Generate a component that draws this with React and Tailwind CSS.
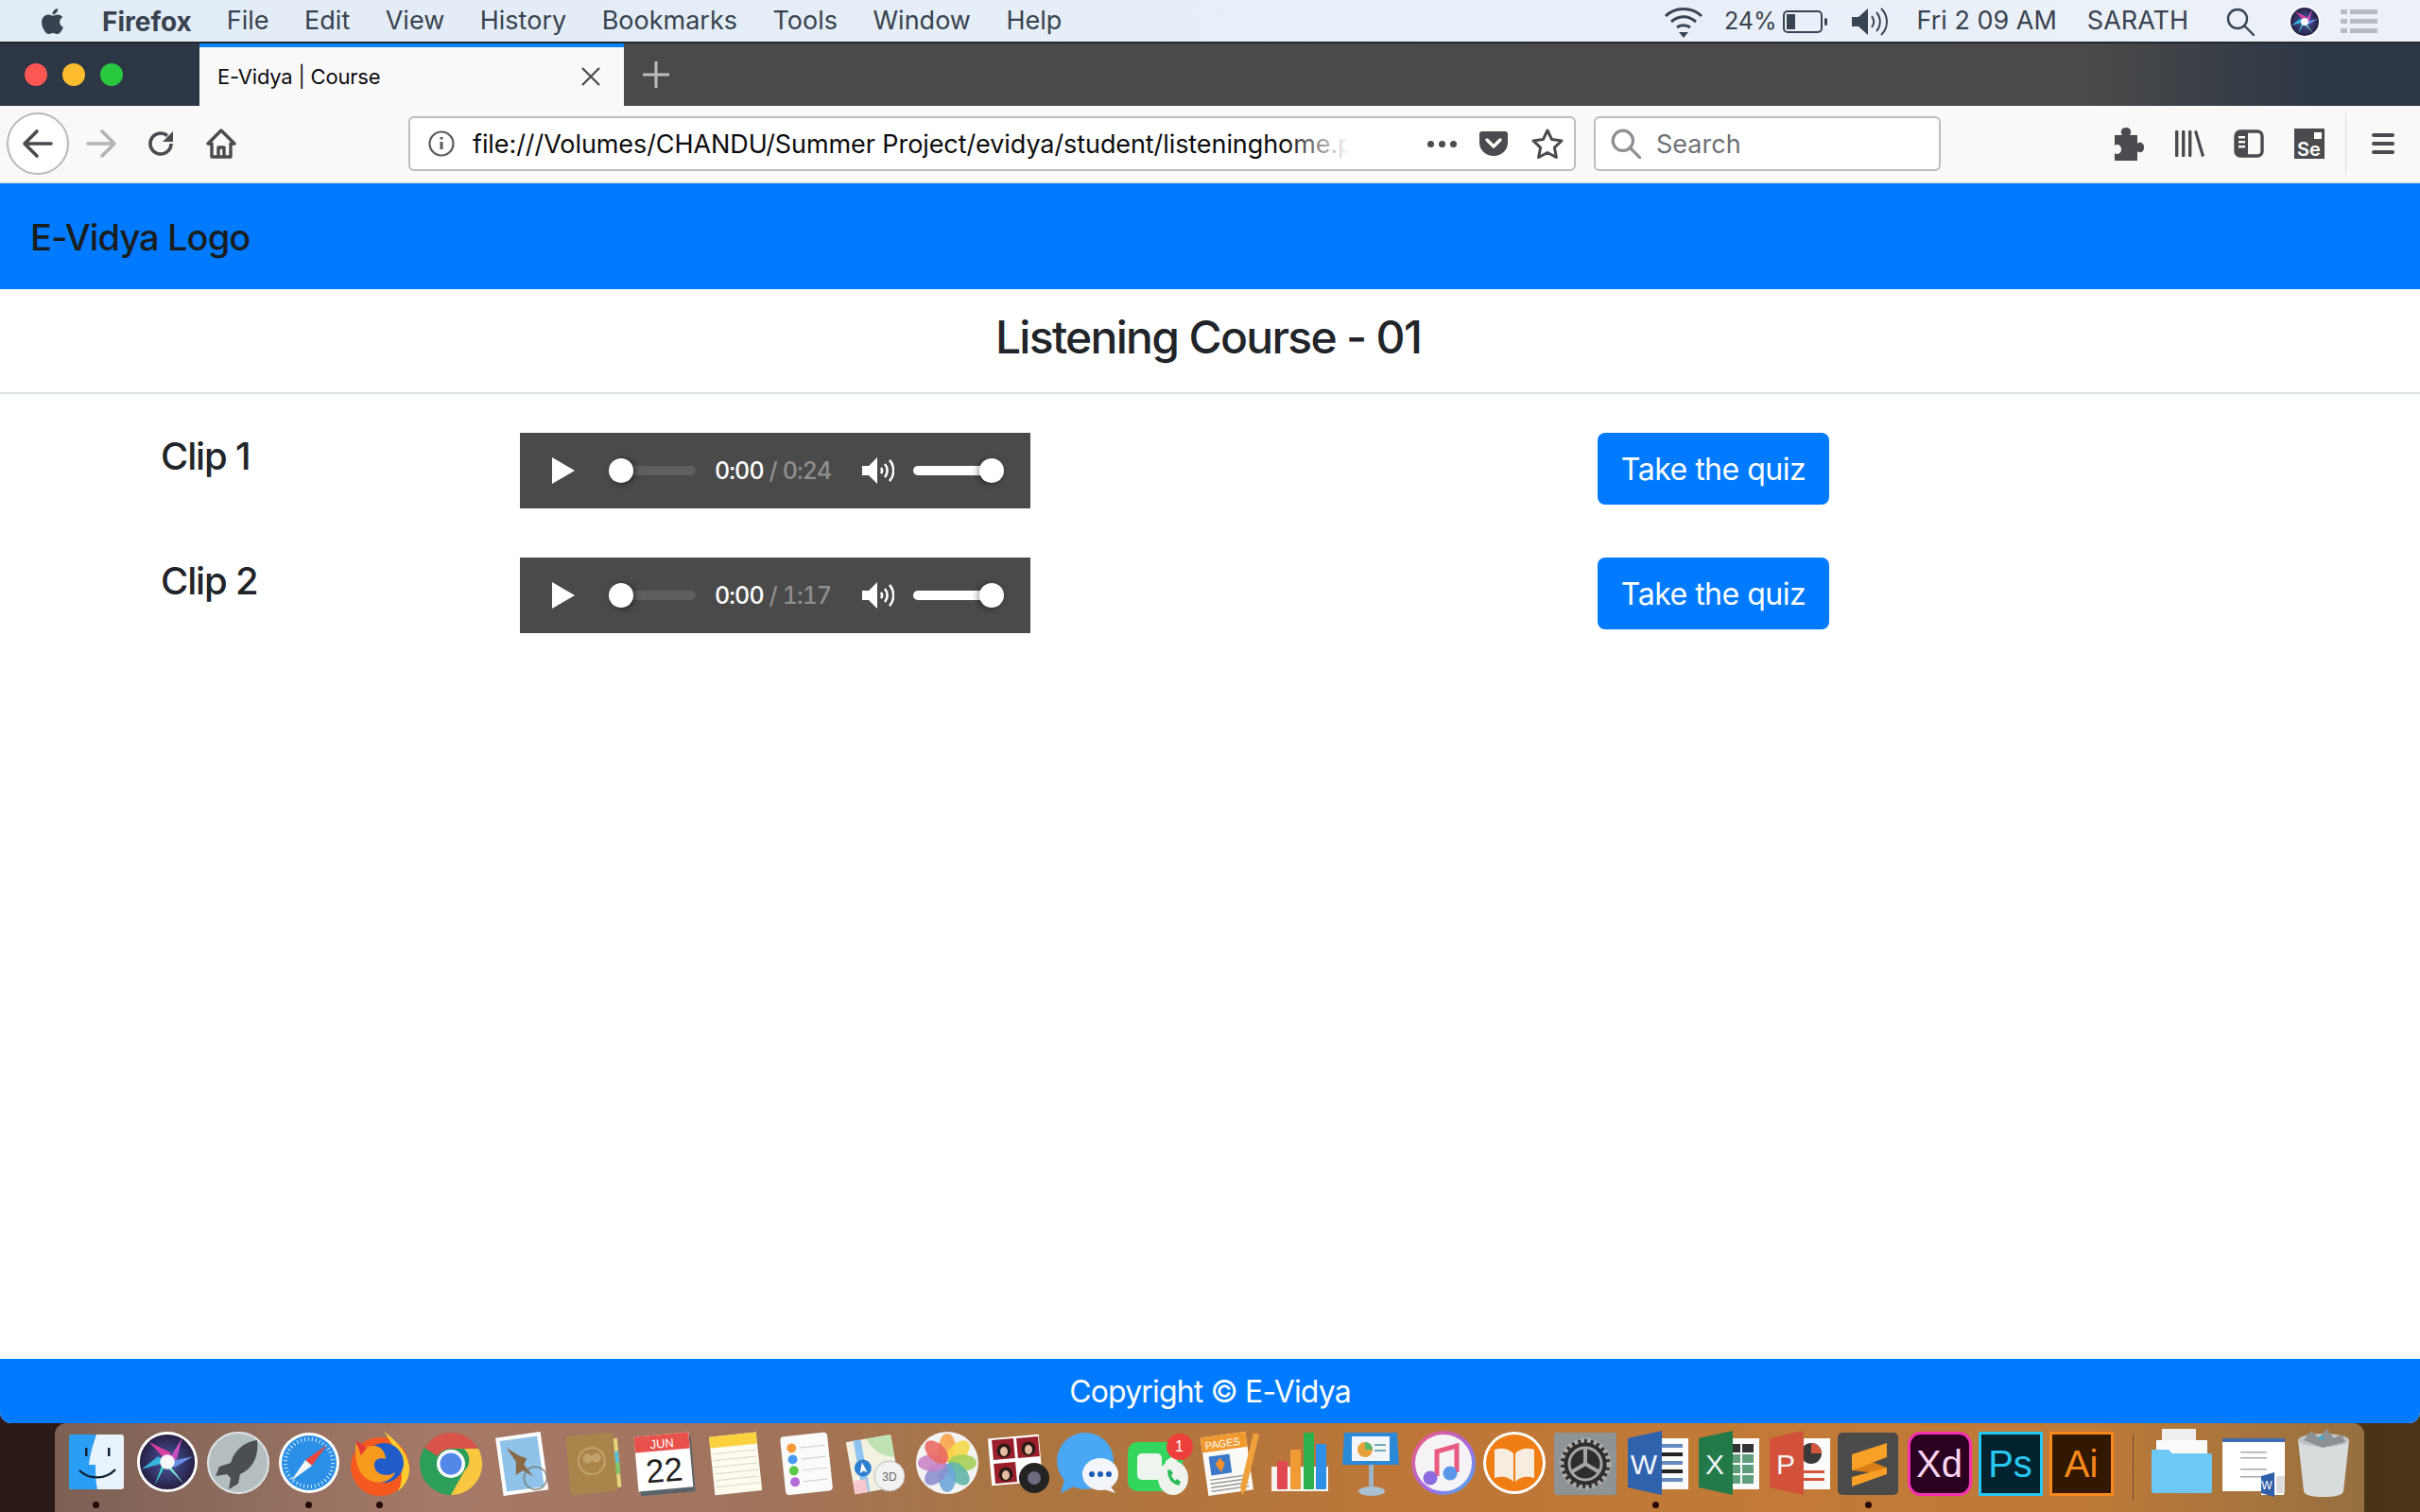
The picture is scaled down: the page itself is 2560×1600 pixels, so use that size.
import React from "react";
import { FaApple } from "react-icons/fa";

const sans = "font-['Inter','Liberation_Sans',Arial,sans-serif]";
const lib = "font-['Liberation_Sans',Arial,sans-serif]";

function Wifi() {
  return (
    <svg width="42" height="36" viewBox="0 0 42 36" fill="none" stroke="#3a4450" strokeWidth="3">
      <path d="M2 12C12 2 30 2 40 12" />
      <path d="M8 18c8-7 18-7 26 0" />
      <path d="M14 24c4-3 10-3 14 0" />
      <path d="M16 29h10l-5 6z" fill="#3a4450" stroke="none" />
    </svg>
  );
}
function Battery() {
  return (
    <svg width="48" height="26" viewBox="0 0 48 26">
      <rect x="1" y="2" width="40" height="22" rx="4" fill="none" stroke="#3a4450" strokeWidth="2" />
      <rect x="4" y="5" width="9" height="16" fill="#3a4450" />
      <rect x="44" y="9" width="3" height="8" rx="1.5" fill="#3a4450" />
    </svg>
  );
}
function SpeakerMenu() {
  return (
    <svg width="42" height="32" viewBox="0 0 42 32" fill="none">
      <path d="M1 11h7l10-9v28l-10-9H1z" fill="#3a4450" />
      <path d="M22 10c3 4 3 8 0 12M27 6c5 6 5 14 0 20M32 2c8 8 8 20 0 28" stroke="#3a4450" strokeWidth="2" />
    </svg>
  );
}
function SearchGlyph({ c = "#3a4450", s = 30, w = 2.4 }) {
  return (
    <svg width={s} height={s} viewBox="0 0 30 30" fill="none" stroke={c} strokeWidth={w}>
      <circle cx="12" cy="12" r="10" />
      <path d="M19 19l10 10" strokeLinecap="round" />
    </svg>
  );
}
function SiriOrb({ s = 34, id = "siriBg" }) {
  return (
    <svg width={s} height={s} viewBox="0 0 68 68">
      <defs>
        <radialGradient id={id} cx="50%" cy="50%" r="55%">
          <stop offset="0%" stopColor="#4e5aa8" />
          <stop offset="100%" stopColor="#211a3a" />
        </radialGradient>
      </defs>
      <circle cx="34" cy="34" r="33" fill="#fff" />
      <circle cx="34" cy="34" r="30" fill={`url(#${id})`} />
      <path d="M34 34L14 12 38 24z" fill="#d8409f" />
      <path d="M34 34L50 8 44 32z" fill="#c94fc0" />
      <path d="M34 34L62 28 42 40z" fill="#6a8fe8" />
      <path d="M34 34L6 42 24 28z" fill="#35b4e0" />
      <path d="M34 34L20 60 28 38z" fill="#38d8c9" />
      <path d="M34 34L52 58 36 42z" fill="#7ce6c8" />
      <circle cx="34" cy="34" r="8" fill="#fff" opacity=".95" />
    </svg>
  );
}

/* Dock icons */
const I = ({ children }) => (
  <svg width="72" height="76" viewBox="0 0 72 76" className="block">
    {children}
  </svg>
);
const Finder = () => (
  <I>
    <rect x="7" y="8" width="58" height="58" rx="3" fill="#e9f3fb" />
    <path d="M10 8h26c-4 12-7 22-8 32h7c0 8 0 18 2 26H10a3 3 0 0 1-3-3V11a3 3 0 0 1 3-3z" fill="#2a9df4" />
    <rect x="24" y="22" width="2.5" height="9" fill="#123" />
    <rect x="48" y="22" width="2.5" height="9" fill="#123" />
    <path d="M18 46c10 10 28 10 38-1" fill="none" stroke="#123" strokeWidth="2.4" />
  </I>
);
const Siri = () => (
  <div className="pt-[4px]">
    <SiriOrb s={66} id="siriBig" />
  </div>
);
const Launchpad = () => (
  <I>
    <circle cx="36" cy="38" r="32" fill="#b4bdc0" />
    <circle cx="36" cy="38" r="32" fill="none" stroke="#dfe6e8" strokeWidth="2" />
    <path d="M56 14c-14 2-24 10-28 24l-12 4-4 10 12-2 4 4-2 12 10-6 2-10c14-6 20-20 18-36z" fill="#4b4f52" />
  </I>
);
const Safari = () => (
  <I>
    <circle cx="36" cy="38" r="32" fill="#fff" />
    <circle cx="36" cy="38" r="29" fill="#2a8fe6" />
    <circle cx="36" cy="38" r="25" fill="none" stroke="#d8ecfb" strokeWidth="4" strokeDasharray="1 3" />
    <path d="M55 19L39 41 32 35z" fill="#e9463f" />
    <path d="M17 57L39 41 32 35z" fill="#f4f6f8" />
  </I>
);
const Firefox = () => (
  <I>
    <circle cx="36" cy="42" r="31" fill="#f5591f" />
    <path d="M40 4c8 8 24 18 27 38 1 10-4 20-12 26 8-16 4-34-15-64z" fill="#ffcb2e" />
    <circle cx="40" cy="38" r="21" fill="#1f5cc9" />
    <path d="M10 18c0 14 0 30 14 38 14 7 26-1 28-8-10 6-22 2-22-8 0-6 6-8 12-6 0-8-6-14-12-14-8 0-14 4-20-2z" fill="#f79a1e" />
    <path d="M10 14l6 16 6-8z" fill="#e53935" />
  </I>
);
const Chrome = () => (
  <I>
    <circle cx="36" cy="39" r="33" fill="#2e9e5b" />
    <path d="M36 6a33 33 0 0 1 29 17H36a16 16 0 0 0-14 8L8 22A33 33 0 0 1 36 6z" fill="#d9534a" />
    <path d="M65 23a33 33 0 0 1-29 49l14-25a16 16 0 0 0 0-24z" fill="#fbc640" />
    <circle cx="36" cy="39" r="15" fill="#fff" />
    <circle cx="36" cy="39" r="11.5" fill="#5488e8" />
  </I>
);
const Mail = () => (
  <I>
    <g transform="rotate(-8 36 38)">
      <rect x="12" y="8" width="48" height="62" fill="#fff" />
      <rect x="16" y="12" width="40" height="54" fill="#8fc3ea" />
      <path d="M22 20l12 10 8 4-4 6 8 14-10-8-8 4 2-14z" fill="#8a6a45" />
      <circle cx="48" cy="56" r="12" fill="none" stroke="#776" strokeWidth="2" opacity=".7" />
    </g>
  </I>
);
const Contacts = () => (
  <I>
    <g transform="rotate(-5 36 38)">
      <rect x="10" y="8" width="50" height="62" rx="3" fill="#a9854c" />
      <rect x="60" y="14" width="4" height="52" fill="#e5d77a" />
      <rect x="60" y="28" width="4" height="12" fill="#55bfd8" />
      <rect x="60" y="40" width="4" height="12" fill="#7ec86a" />
      <circle cx="35" cy="36" r="14" fill="none" stroke="#c2a26a" strokeWidth="2" />
      <circle cx="31" cy="33" r="5" fill="#c2a26a" />
      <circle cx="40" cy="33" r="5" fill="#c2a26a" />
    </g>
  </I>
);
const Calendar = () => (
  <I>
    <g transform="rotate(-5 36 38)">
      <rect x="9" y="11" width="58" height="60" rx="2" fill="#59636b" />
      <rect x="7" y="8" width="58" height="58" fill="#fff" />
      <rect x="7" y="8" width="58" height="17" fill="#e9524c" />
      <text x="36" y="22" textAnchor="middle" fontSize="13" fill="#fff" fontFamily="Liberation Sans, sans-serif">JUN</text>
      <text x="36" y="58" textAnchor="middle" fontSize="35" fill="#222" fontFamily="Liberation Sans, sans-serif">22</text>
    </g>
  </I>
);
const Notes = () => (
  <I>
    <g transform="rotate(-6 36 38)">
      <rect x="12" y="8" width="50" height="62" fill="#fdfbee" />
      <rect x="12" y="8" width="50" height="12" fill="#fbd23d" />
      {[26, 33, 40, 47, 54, 61].map((y) => (
        <rect key={y} x="14" y={y} width="46" height="1" fill="#d8d6c8" />
      ))}
    </g>
  </I>
);
const Reminders = () => (
  <I>
    <g transform="rotate(-6 36 38)">
      <rect x="12" y="8" width="50" height="62" rx="4" fill="#fbfbfb" />
      <circle cx="23" cy="21" r="5" fill="#f39a3d" />
      <circle cx="23" cy="33" r="5" fill="#4a9cf0" />
      <circle cx="23" cy="45" r="5" fill="#5cc84a" />
      <circle cx="23" cy="57" r="5" fill="#b56bd8" />
      {[21, 33, 45, 57].map((y) => (
        <rect key={y} x="32" y={y} width="26" height="1" fill="#ccc" />
      ))}
    </g>
  </I>
);
const Maps = () => (
  <I>
    <g transform="rotate(-10 30 38)">
      <rect x="8" y="12" width="48" height="56" fill="#f3f1e2" />
      <path d="M30 12h26v24C44 34 34 26 30 12z" fill="#bfe3b5" />
      <rect x="16" y="12" width="8" height="56" fill="#8ec4ef" />
      <rect x="8" y="54" width="14" height="14" fill="#f7c9cf" />
      <circle cx="21" cy="42" r="9" fill="#2f7fd0" />
      <path d="M21 36l4 11-4-2-4 2z" fill="#fff" />
    </g>
    <circle cx="50" cy="52" r="16" fill="#f2f2f2" stroke="#bbb" />
    <text x="50" y="57" textAnchor="middle" fontSize="12" fill="#666" fontFamily="Liberation Sans, sans-serif">3D</text>
  </I>
);
const Photos = () => {
  const c = ["#f9a34a", "#f7d84a", "#a6cf59", "#62b7a8", "#6da6d9", "#8d8fd0", "#c985c5", "#ea6a63"];
  return (
    <I>
      <circle cx="36" cy="38" r="33" fill="#f3f3f3" />
      {c.map((f, i) => (
        <ellipse key={f} cx="36" cy="22" rx="9" ry="15" fill={f} opacity=".9" transform={`rotate(${i * 45} 36 38)`} />
      ))}
    </I>
  );
};
const PhotoBooth = () => (
  <I>
    <rect x="6" y="10" width="54" height="50" fill="#fff" transform="rotate(-5 33 35)" />
    <rect x="9" y="13" width="23" height="21" fill="#9b1f2a" transform="rotate(-5 20 24)" />
    <rect x="35" y="11" width="23" height="21" fill="#9b1f2a" transform="rotate(-5 46 22)" />
    <rect x="11" y="38" width="23" height="21" fill="#9b1f2a" transform="rotate(-5 22 48)" />
    {[[21, 25], [47, 23], [23, 50]].map(([x, y]) => (
      <g key={x}>
        <circle cx={x} cy={y} r="7.5" fill="#2a1b18" />
        <ellipse cx={x} cy={y + 1} rx="4" ry="5" fill="#e6bba0" />
      </g>
    ))}
    <circle cx="53" cy="54" r="16" fill="#232323" />
    <circle cx="53" cy="54" r="7" fill="#6f6a80" />
  </I>
);
const Messages = () => (
  <I>
    <ellipse cx="32" cy="36" rx="30" ry="30" fill="#4aa7f3" />
    <path d="M10 56l-4 14 16-8z" fill="#4aa7f3" />
    <ellipse cx="48" cy="50" rx="19" ry="17" fill="#f2f6fa" />
    <path d="M58 62l6 8-12-4z" fill="#f2f6fa" />
    <circle cx="39" cy="50" r="3" fill="#1a5bb5" />
    <circle cx="48" cy="50" r="3" fill="#1a5bb5" />
    <circle cx="57" cy="50" r="3" fill="#1a5bb5" />
  </I>
);
const FaceTime = () => (
  <div className="relative">
    <I>
      <rect x="2" y="16" width="58" height="52" rx="10" fill="#35d65e" />
      <rect x="12" y="28" width="26" height="28" rx="5" fill="#eef5ee" />
      <path d="M42 36l12-8v28l-12-8z" fill="#eef5ee" />
      <ellipse cx="50" cy="54" rx="16" ry="18" fill="#eef3ee" />
      <path d="M44 46c0 8 4 14 12 16l2-4-4-3-2 2c-2-2-3-4-4-6l2-2-3-4z" fill="#2cbb55" />
    </I>
    <span className={`absolute left-[43px] top-[7px] flex h-[28px] w-[28px] items-center justify-center rounded-full bg-[#ee3f3c] text-[16px] text-white ${lib}`}>1</span>
  </div>
);
const Pages = () => (
  <I>
    <g transform="rotate(-8 32 40)">
      <rect x="8" y="8" width="48" height="62" fill="#fbfaf6" />
      <rect x="8" y="8" width="48" height="16" fill="#f2992e" />
      <text x="12" y="21" fontSize="11" fill="#fff" fontFamily="Liberation Sans, sans-serif">PAGES</text>
      <rect x="14" y="29" width="22" height="20" fill="#3c79c8" />
      <path d="M25 32l5 6-5 9-5-9z" fill="#f4902c" />
      {[53, 57, 61, 65].map((y) => (
        <rect key={y} x="12" y={y} width="40" height="1.4" fill="#999" />
      ))}
    </g>
    <path d="M60 6l6 2-14 58-4 6-2-8z" fill="#f0a13a" />
  </I>
);
const Numbers = () => (
  <I>
    <rect x="4" y="42" width="60" height="26" fill="#f4f4f0" />
    <rect x="10" y="36" width="11" height="30" rx="1" fill="#e2484f" />
    <rect x="24" y="24" width="11" height="42" rx="1" fill="#f29a36" />
    <rect x="38" y="6" width="11" height="60" rx="1" fill="#2cb24d" />
    <rect x="51" y="18" width="11" height="48" rx="1" fill="#2e8fe6" />
  </I>
);
const Keynote = () => (
  <I>
    <path d="M6 6h56l2 34H4z" fill="#2a8ad8" />
    <rect x="14" y="10" width="40" height="26" fill="#f3f6f9" />
    <circle cx="28" cy="24" r="8" fill="#e8a03a" />
    <path d="M28 24V16a8 8 0 0 1 8 8z" fill="#54b96a" />
    <rect x="38" y="18" width="12" height="2" fill="#7aa" />
    <rect x="38" y="24" width="12" height="2" fill="#7aa" />
    <rect x="32" y="40" width="5" height="24" fill="#9fb4c5" />
    <ellipse cx="35" cy="68" rx="14" ry="5" fill="#a9c0d2" />
  </I>
);
const Itunes = () => (
  <I>
    <defs>
      <linearGradient id="itg" x1="0" y1="0" x2="1" y2="1">
        <stop offset="0%" stopColor="#f25b7a" />
        <stop offset="60%" stopColor="#a26ae8" />
        <stop offset="100%" stopColor="#42b4ea" />
      </linearGradient>
    </defs>
    <circle cx="36" cy="38" r="32" fill="#f6f3f6" stroke="url(#itg)" strokeWidth="4" />
    <path d="M29 52V26l21-6v28" fill="none" stroke="#e85a80" strokeWidth="5" />
    <circle cx="22" cy="54" r="7.5" fill="#8a6be0" />
    <circle cx="43" cy="49" r="7.5" fill="#5a96ea" />
  </I>
);
const Books = () => (
  <I>
    <circle cx="36" cy="38" r="33" fill="#fff" />
    <circle cx="36" cy="38" r="30" fill="#f07e15" />
    <path d="M35 28c-6-6-14-6-20-4v30c8-2 14-2 20 4zM37 28c6-6 14-6 20-4v30c-8-2-14-2-20 4z" fill="#f6ecdf" />
  </I>
);
const Prefs = () => (
  <I>
    <rect x="3" y="6" width="66" height="66" rx="3" fill="#8e9396" />
    <circle cx="36" cy="39" r="26" fill="#2d2d2d" />
    <circle cx="36" cy="39" r="25" fill="none" stroke="#aaa" strokeWidth="5" strokeDasharray="4 3" />
    <circle cx="36" cy="39" r="17" fill="none" stroke="#a5a5a5" strokeWidth="3" />
    <path d="M36 39V22M36 39L21 48M36 39l15 9" stroke="#a5a5a5" strokeWidth="4" />
  </I>
);
const Office = ({ bg, letter, kind }) => (
  <I>
    <rect x="30" y="12" width="40" height="54" fill="#fbfbfb" />
    {kind === "w" &&
      [18, 27, 36, 45, 54].map((y) => <rect key={y} x="36" y={y} width="28" height="4" fill={y % 2 ? "#222" : "#6689bf"} />)}
    {kind === "x" &&
      [18, 29, 40, 51].map((y) => (
        <g key={y}>
          <rect x="38" y={y} width="12" height="9" fill={y === 18 ? "#333" : "#5f9e7c"} />
          <rect x="52" y={y} width="12" height="9" fill={y === 18 ? "#333" : "#5f9e7c"} />
        </g>
      ))}
    {kind === "p" && (
      <g>
        <circle cx="50" cy="28" r="11" fill="#3a3a3a" />
        <path d="M50 28V17a11 11 0 0 1 11 11z" fill="#d3563a" />
        <rect x="38" y="46" width="26" height="3" fill="#d3563a" />
        <rect x="38" y="54" width="26" height="3" fill="#d3563a" />
      </g>
    )}
    <path d="M6 12L42 4v68L6 64z" fill={bg} />
    <text x="23" y="50" textAnchor="middle" fontSize="30" fill="#f2f6fb" fontFamily="Liberation Sans, sans-serif">{letter}</text>
  </I>
);
const Sublime = () => (
  <I>
    <rect x="3" y="6" width="64" height="66" rx="5" fill="#4a4a4a" />
    <path d="M18 29L55 43V50L18 46z" fill="#d97f16" />
    <path d="M55 17V32L18 46V29z" fill="#f8a126" />
    <path d="M55 43V50L18 63V53z" fill="#f8a126" />
  </I>
);
const Adobe = ({ text, border, bg, fg, round }) => (
  <div className={`flex h-[68px] w-[68px] items-center justify-center border-[3px] ${round} ${border} ${bg} ${fg} ${lib} text-[40px] leading-none`}>
    {text}
  </div>
);
const Folder = () => (
  <I>
    <rect x="14" y="2" width="36" height="30" fill="#eee" />
    <rect x="8" y="14" width="54" height="20" fill="#fbfbfb" />
    <path d="M3 24h18l4 4h40a2 2 0 0 1 2 2v38a2 2 0 0 1-2 2H5a2 2 0 0 1-2-2z" fill="#6dc8f5" />
  </I>
);
const Docu = () => (
  <I>
    <rect x="3" y="12" width="66" height="56" fill="#fff" />
    <rect x="3" y="12" width="66" height="4" fill="#3e6db5" />
    {[26, 32, 44, 52].map((y) => (
      <rect key={y} x="22" y={y} width="28" height="1.5" fill="#aaa" />
    ))}
    <rect x="44" y="48" width="24" height="24" fill="#fff" />
    <path d="M44 52l14-4v26l-14-4z" fill="#2f5ea8" />
    <text x="50" y="66" textAnchor="middle" fontSize="12" fill="#fff" fontFamily="Liberation Sans, sans-serif">W</text>
    <rect x="60" y="52" width="9" height="18" fill="#ddd" />
  </I>
);
const Trash = () => (
  <I>
    <path d="M8 14h54l-6 54c-1 4-8 6-21 6s-20-2-21-6z" fill="#d9dcdd" />
    <ellipse cx="35" cy="14" rx="27" ry="7" fill="#bfc3c5" />
    <path d="M14 14l8-10 8 8 8-10 8 10 8-4 4 8-24 6z" fill="#8c9093" />
    <path d="M28 12l6-4 2 6z" fill="#4aa9c8" />
  </I>
);

const dockItems = [
  [Finder, 1], [Siri], [Launchpad], [Safari, 1], [Firefox, 1], [Chrome], [Mail], [Contacts], [Calendar], [Notes],
  [Reminders], [Maps], [Photos], [PhotoBooth], [Messages], [FaceTime], [Pages], [Numbers], [Keynote], [Itunes],
  [Books], [Prefs],
];

function DockSlot({ children, dot }) {
  return (
    <div className="relative flex h-full w-[75px] shrink-0 items-start justify-center pt-[4px]">
      {children}
      {dot && <span className="absolute bottom-[4px] left-[34px] h-[7px] w-[7px] rounded-full bg-[#260606]" />}
    </div>
  );
}

function Dock() {
  return (
    <div className="ml-[58px] flex h-[94px] w-[2443px] rounded-t-[12px] bg-[linear-gradient(90deg,#7b6053_0%,#a67a68_17%,#a0735c_30%,#ab7540_42%,#bd7638_58%,#c27a36_75%,#bf7a38_88%,#967040_100%)] pl-[6px]">
      {dockItems.map(([C, d], i) => (
        <DockSlot key={i} dot={d}>
          <C />
        </DockSlot>
      ))}
      <DockSlot dot><Office bg="#2f63ae" letter="W" kind="w" /></DockSlot>
      <DockSlot><Office bg="#227a49" letter="X" kind="x" /></DockSlot>
      <DockSlot><Office bg="#d3513a" letter="P" kind="p" /></DockSlot>
      <DockSlot dot><Sublime /></DockSlot>
      <DockSlot>
        <div className="pt-[5px]"><Adobe text="Xd" border="border-[#f92fb4]" bg="bg-[#2b0020]" fg="text-[#fbd5f0]" round="rounded-[14px]" /></div>
      </DockSlot>
      <DockSlot>
        <div className="pt-[5px]"><Adobe text="Ps" border="border-[#27c8f2]" bg="bg-[#02222e]" fg="text-[#27c8f2]" round="rounded-none" /></div>
      </DockSlot>
      <DockSlot>
        <div className="pt-[5px]"><Adobe text="Ai" border="border-[#f7891d]" bg="bg-[#331800]" fg="text-[#f7891d]" round="rounded-none" /></div>
      </DockSlot>
      <div className="ml-[17px] mr-[14px] mt-[12px] h-[70px] w-[1px] bg-[#7a4a1c]" />
      <DockSlot><Folder /></DockSlot>
      <DockSlot><Docu /></DockSlot>
      <DockSlot><Trash /></DockSlot>
    </div>
  );
}

function MenuBar() {
  return (
    <div className={`flex h-[44px] shrink-0 items-center bg-[linear-gradient(90deg,#e2ecf6,#ecf1f9)] pt-[1px] text-[27px] text-[#38424e] ${sans}`}>
      <FaApple className="ml-[40px] text-[31px] text-[#38424e]" />
      <span className="ml-[37px] text-[28px] font-bold">Firefox</span>
      <div className="ml-[37px] flex gap-[37.5px]">
        <span>File</span>
        <span>Edit</span>
        <span>View</span>
        <span>History</span>
        <span>Bookmarks</span>
        <span>Tools</span>
        <span>Window</span>
        <span>Help</span>
      </div>
      <div className="ml-auto flex items-center">
        <Wifi />
        <span className="ml-[22px] text-[25px]">24%</span>
        <span className="ml-[6px] flex"><Battery /></span>
        <span className="ml-[24px] flex"><SpeakerMenu /></span>
        <span className="ml-[28px]">Fri 2 09 AM</span>
        <span className="ml-[32px]">SARATH</span>
        <span className="ml-[40px] flex"><SearchGlyph /></span>
        <span className="ml-[36px] flex"><SiriOrb /></span>
        <span className="ml-[21px] mr-[45px] flex w-[39px] flex-col gap-[5px]">
          {[0, 1, 2].map((k) => (
            <span key={k} className="flex gap-[3px]">
              <span className="h-[5px] w-[7px] bg-[#b8bcc2]" />
              <span className="h-[5px] flex-1 bg-[#b8bcc2]" />
            </span>
          ))}
        </span>
      </div>
    </div>
  );
}

function TabBar() {
  return (
    <div className={`flex h-[68px] shrink-0 border-t-[2px] border-[#23282e] bg-[linear-gradient(90deg,#4a4a4a_0%,#4a4a4a_86%,#2c3644_96%,#2c3644_100%)] ${sans}`}>
      <div className="flex w-[211px] items-center gap-[16px] bg-[#2c3644] pl-[26px]">
        <span className="h-[24px] w-[24px] rounded-full bg-[#fc5753]" />
        <span className="h-[24px] w-[24px] rounded-full bg-[#fdbc2e]" />
        <span className="h-[24px] w-[24px] rounded-full bg-[#28c83f]" />
      </div>
      <div className="flex w-[449px] items-center border-t-[4px] border-[#0a84ff] bg-[#f9f9fa] pl-[19px] pr-[24px] text-[22px] tracking-[-0.2px] text-[#0c0c0d]">
        <span>E-Vidya | Course</span>
        <svg className="ml-auto" width="22" height="22" viewBox="0 0 22 22" stroke="#4a4a4a" strokeWidth="2.2" fill="none">
          <path d="M2 2l18 18M20 2L2 20" />
        </svg>
      </div>
      <svg className="ml-[20px] self-center" width="28" height="28" viewBox="0 0 28 28" stroke="#bdbdbd" strokeWidth="3" fill="none">
        <path d="M14 0v28M0 14h28" />
      </svg>
    </div>
  );
}

function Toolbar() {
  return (
    <div className={`flex h-[82px] shrink-0 items-center border-b-[2px] border-[#e6e6e6] bg-[#f9f9fa] ${sans}`}>
      <div className="ml-[7px] flex h-[66px] w-[66px] items-center justify-center rounded-full border-[2px] border-[#b8b8b8] bg-white">
        <svg width="34" height="34" viewBox="0 0 34 34" fill="none" stroke="#4a4a4f" strokeWidth="3.6" strokeLinecap="round" strokeLinejoin="round">
          <path d="M3 17h28M16 4L3 17l13 13" />
        </svg>
      </div>
      <svg className="ml-[17px]" width="34" height="34" viewBox="0 0 34 34" fill="none" stroke="#b4b4b4" strokeWidth="3.6" strokeLinecap="round" strokeLinejoin="round">
        <path d="M31 17H3M18 4l13 13-13 13" />
      </svg>
      <svg className="ml-[31px]" width="30" height="30" viewBox="0 0 30 30" fill="none" stroke="#4a4a4f" strokeWidth="3.6">
        <path d="M26 15a11 11 0 1 1-4-8.5" />
        <path d="M28 2v11H17z" fill="#4a4a4f" stroke="none" />
      </svg>
      <svg className="ml-[33px]" width="32" height="32" viewBox="0 0 32 32" fill="none" stroke="#4a4a4f" strokeWidth="3.4" strokeLinejoin="round">
        <path d="M2 16L16 2l14 14h-4v14H6V16z" />
        <path d="M13 29v-9h6v9" />
      </svg>
      <div className="relative ml-[182px] flex h-[58px] w-[1235px] items-center overflow-hidden rounded-[6px] border-[2px] border-[#bdbdbd] bg-white">
        <svg className="ml-[18px]" width="30" height="30" viewBox="0 0 30 30" fill="none" stroke="#5a5a5f" strokeWidth="2.2">
          <circle cx="15" cy="15" r="12.5" />
          <path d="M15 13v8M15 8v2.5" strokeWidth="3" />
        </svg>
        <span className="ml-[18px] whitespace-nowrap pt-[2px] text-[27px] tracking-[-0.08px] text-[#0c0c0d]">file:///Volumes/CHANDU/Summer Project/evidya/student/listeninghome.pl</span>
        <span className="absolute left-[925px] top-0 h-full w-[80px] bg-[linear-gradient(90deg,rgba(255,255,255,0),#fff_85%)]" />
        <div className="absolute right-[11px] top-0 flex h-full items-center bg-white pl-[20px]">
          <span className="flex gap-[5px]">
            <span className="h-[7px] w-[7px] rounded-full bg-[#4a4a4f]" />
            <span className="h-[7px] w-[7px] rounded-full bg-[#4a4a4f]" />
            <span className="h-[7px] w-[7px] rounded-full bg-[#4a4a4f]" />
          </span>
          <svg className="ml-[23px]" width="32" height="30" viewBox="0 0 32 30">
            <path d="M4 2h24a3 3 0 0 1 3 3v9c0 8-7 14-15 14S1 22 1 14V5a3 3 0 0 1 3-3z" fill="#4a4a4f" />
            <path d="M9 11l7 7 7-7" fill="none" stroke="#fff" strokeWidth="3.4" strokeLinecap="round" strokeLinejoin="round" />
          </svg>
          <svg className="ml-[24px]" width="34" height="32" viewBox="0 0 34 32" fill="none" stroke="#4a4a4f" strokeWidth="3" strokeLinejoin="round">
            <path d="M17 2l4.6 9.6 10.4 1.4-7.6 7.2 2 10.3L17 25.5 7.6 30.5l2-10.3L2 13l10.4-1.4z" />
          </svg>
        </div>
      </div>
      <div className="ml-[19px] flex h-[58px] w-[367px] items-center rounded-[6px] border-[2px] border-[#bdbdbd] bg-white">
        <span className="ml-[16px] flex"><SearchGlyph c="#8f8f93" s={32} w={3} /></span>
        <span className="ml-[16px] pt-[2px] text-[27px] text-[#6f6f73]">Search</span>
      </div>
      <svg className="ml-[182px]" width="34" height="36" viewBox="0 0 34 36" fill="#4a4a4f">
        <path d="M2 9h8c-2-2-2-8 4-8s6 6 4 8h8v9c2-2 7-2 7 4s-5 6-7 4v10H2v-8c2 2 7 1 7-4s-5-6-7-4z" />
      </svg>
      <svg className="ml-[31px]" width="32" height="30" viewBox="0 0 32 30" fill="#4a4a4f">
        <rect x="1" y="1" width="3.4" height="28" rx="1" />
        <rect x="8" y="1" width="3.4" height="28" rx="1" />
        <rect x="15" y="1" width="3.4" height="28" rx="1" />
        <path d="M21 2l3-1 8 27-3 1z" />
      </svg>
      <svg className="ml-[31px]" width="32" height="30" viewBox="0 0 32 30" fill="none">
        <rect x="2" y="2" width="28" height="26" rx="5" stroke="#4a4a4f" strokeWidth="3.4" />
        <rect x="2" y="2" width="13" height="26" rx="3" fill="#4a4a4f" />
        <rect x="5" y="7" width="7" height="2.4" fill="#fff" />
        <rect x="5" y="12" width="7" height="2.4" fill="#fff" />
        <rect x="5" y="17" width="7" height="2.4" fill="#fff" />
      </svg>
      <div className="relative ml-[32px] h-[32px] w-[32px] bg-[#4a4a4f] text-[20px] font-semibold leading-[44px] text-white">
        <span className="absolute right-[3px] top-[4px] h-[7px] w-[8px] bg-white" />
        <span className="absolute left-[3px] top-0">Se</span>
      </div>
      <div className="ml-[22px] h-[66px] w-[1px] bg-[#dcdcdc]" />
      <div className="ml-[27px] flex w-[24px] flex-col gap-[5px]">
        <span className="h-[4px] rounded-full bg-[#4a4a4f]" />
        <span className="h-[4px] rounded-full bg-[#4a4a4f]" />
        <span className="h-[4px] rounded-full bg-[#4a4a4f]" />
      </div>
    </div>
  );
}

function AudioPlayer({ total }) {
  return (
    <div className={`flex h-[80px] w-[540px] items-center bg-[#4a4a4a] ${sans}`}>
      <svg className="ml-[34px]" width="24" height="30" viewBox="0 0 24 30">
        <path d="M0 1l24 14L0 29z" fill="#fff" />
      </svg>
      <div className="relative ml-[36px] h-[10px] w-[92px] rounded-full bg-[#5f5f5f]">
        <span className="absolute left-0 top-[-8px] h-[26px] w-[26px] rounded-full bg-white shadow-[2px_1px_6px_rgba(0,0,0,.5)]" />
      </div>
      <span className="ml-[20px] w-[132px] whitespace-nowrap pt-[2px] text-[25px] font-[450] tabular-nums tracking-[-0.9px] text-white">
        0:00<span className="text-[#8e8e8e]"> / {total}</span>
      </span>
      <svg className="ml-[24px]" width="34" height="30" viewBox="0 0 34 30" fill="none">
        <path d="M0 10h7l9-9v28l-9-9H0z" fill="#fff" />
        <path d="M20 12c1.5 2 1.5 4 0 6M24 8c3.5 4 3.5 10 0 14M29 4c5.5 6 5.5 16 0 22" stroke="#fff" strokeWidth="2.6" />
      </svg>
      <div className="relative ml-[20px] h-[10px] w-[83px] rounded-full bg-white">
        <span className="absolute right-[-13px] top-[-8px] h-[26px] w-[26px] rounded-full bg-white shadow-[-2px_1px_6px_rgba(0,0,0,.4)]" />
      </div>
    </div>
  );
}

function ClipRow({ name, total }) {
  return (
    <div className="flex h-[80px] items-start">
      <h5 className="w-[550px] pl-[170px] pt-[1px] text-[40px] font-medium leading-[48px] tracking-[-1.2px] text-[#212529]">{name}</h5>
      <AudioPlayer total={total} />
      <button className="ml-[600px] h-[76px] w-[245px] rounded-[8px] bg-[#007bff] pt-[2px] text-[32px] tracking-[-0.5px] text-white">Take the quiz</button>
    </div>
  );
}

export default function App() {
  return (
    <div className={`flex h-[1600px] w-[2560px] flex-col overflow-hidden bg-[linear-gradient(90deg,#2a1917_0%,#3a2320_50%,#4a3418_100%)] ${sans}`}>
      <div className="flex h-[1506px] shrink-0 flex-col overflow-hidden rounded-b-[12px] bg-white">
        <MenuBar />
        <TabBar />
        <Toolbar />
        <nav className="flex h-[112px] shrink-0 items-center bg-[#007bff] pl-[32px] pt-[2px] text-[38px] font-[450] tracking-[-0.9px] text-[#1a1e21]">E-Vidya Logo</nav>
        <div className="flex h-[111px] shrink-0 items-center justify-center border-b-[2px] border-[#dee2e6] pb-[8px] pr-[4px]">
          <h4 className="text-[48px] font-medium leading-none tracking-[-1.7px] text-[#212529]">Listening Course - 01</h4>
        </div>
        <main className="flex flex-1 flex-col gap-[52px] pt-[41px]">
          <ClipRow name="Clip 1" total="0:24" />
          <ClipRow name="Clip 2" total="1:17" />
        </main>
        <footer className="flex h-[68px] shrink-0 items-center justify-center bg-[#007bff] pt-[2px] text-[32px] tracking-[-0.85px] text-white">Copyright © E-Vidya</footer>
      </div>
      <Dock />
    </div>
  );
}
